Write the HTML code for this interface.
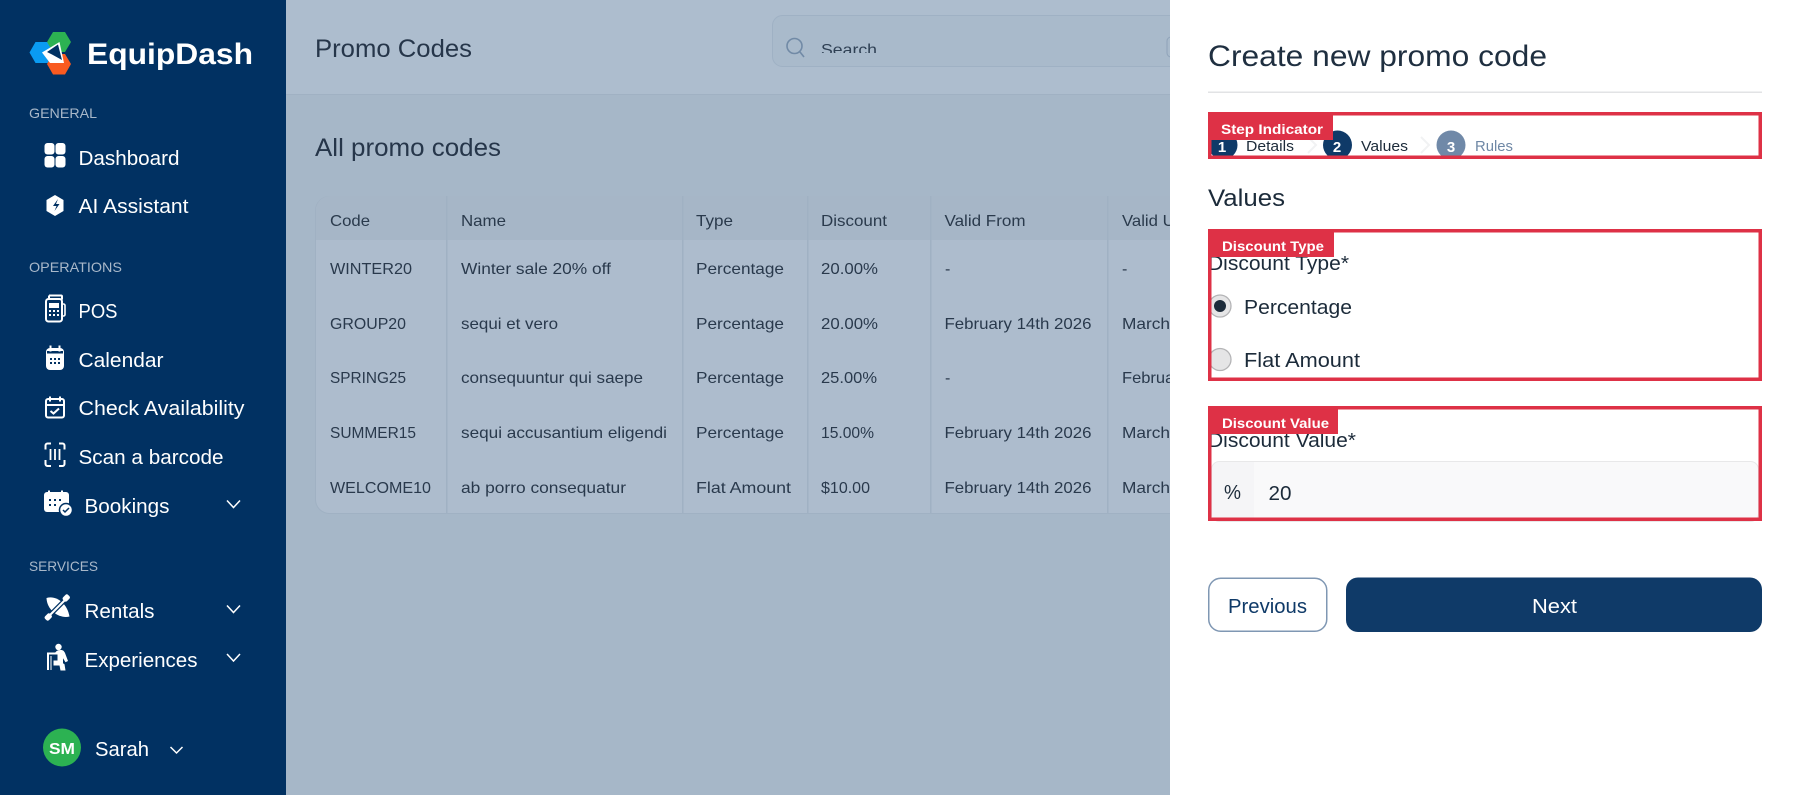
<!DOCTYPE html>
<html><head><meta charset="utf-8"><title>Promo Codes</title>
<style>
html,body{margin:0;padding:0;width:1800px;height:795px;overflow:hidden;background:#fff}
svg{display:block;position:absolute;left:0;top:0}
text{font-family:"Liberation Sans",sans-serif}
.n{font-size:20px;fill:#fff}
.s{font-size:14px;fill:#a9b8c9}
.t{font-size:16px;fill:#29394c}
.h{font-size:16px;fill:#2a3a4c}
.lb{font-size:14px;fill:#fff;font-weight:bold}
.f{font-size:20px;fill:#1c2b3a}
.st{font-size:15px;fill:#1c2b3a}
</style></head><body>
<svg width="1800" height="795" viewBox="0 0 1800 795" xmlns="http://www.w3.org/2000/svg">
<defs><clipPath id="step"><rect x="1211" y="115" width="548" height="41"/></clipPath>
<clipPath id="bx2"><rect x="1211" y="232" width="548" height="146"/></clipPath>
<clipPath id="srch"><rect x="815" y="35" width="70" height="18"/></clipPath></defs>

<!-- main background -->
<rect x="286" y="0" width="884" height="795" fill="#a6b7c8"/>
<rect x="286" y="0" width="884" height="94" fill="#adbdce"/>
<rect x="286" y="94" width="884" height="1" fill="#a0b1c3"/>
<text x="315" y="57" font-size="25" fill="#26364a" textLength="157" lengthAdjust="spacingAndGlyphs">Promo Codes</text>
<rect x="772.5" y="15.5" width="420" height="51" rx="10" fill="#a9bacb" stroke="#9fb1c4"/>
<circle cx="794.5" cy="46" r="7.5" fill="none" stroke="#718aa6" stroke-width="1.6"/>
<path d="M800 52l4 5" stroke="#718aa6" stroke-width="1.6" fill="none"/>
<g clip-path="url(#srch)"><text x="821" y="55" font-size="16" fill="#2f4054" textLength="56" lengthAdjust="spacingAndGlyphs">Search</text></g>
<rect x="1167" y="37" width="20" height="20" rx="4" fill="none" stroke="#8fa3b9"/>
<text x="315" y="156" font-size="25" fill="#26364a" textLength="186" lengthAdjust="spacingAndGlyphs">All promo codes</text>

<!-- table -->
<rect x="315.500" y="196.500" width="880" height="317" rx="14" fill="#adbccd" stroke="#a0b1c3"/>
<path d="M316 240V210a14 14 0 0 1 14-14H1190V240Z" fill="#a6b6c7"/>
<g fill="#a0b1c3"><rect x="446" y="196" width="1.500" height="318"/><rect x="682" y="196" width="1.500" height="318"/><rect x="807" y="196" width="1.500" height="318"/><rect x="930" y="196" width="1.500" height="318"/><rect x="1107" y="196" width="1.500" height="318"/></g>
<g class="h">
<text class="h" x="330" y="226" textLength="40" lengthAdjust="spacingAndGlyphs">Code</text>
<text class="h" x="461" y="226" textLength="45" lengthAdjust="spacingAndGlyphs">Name</text>
<text class="h" x="696" y="226" textLength="37" lengthAdjust="spacingAndGlyphs">Type</text>
<text class="h" x="821" y="226" textLength="66" lengthAdjust="spacingAndGlyphs">Discount</text>
<text class="h" x="944.500" y="226" textLength="81" lengthAdjust="spacingAndGlyphs">Valid From</text>
<text class="h" x="1122" y="226" textLength="74" lengthAdjust="spacingAndGlyphs">Valid Until</text>
</g>
<text class="t" x="330" y="274" textLength="82" lengthAdjust="spacingAndGlyphs">WINTER20</text>
<text class="t" x="461" y="274" textLength="150" lengthAdjust="spacingAndGlyphs">Winter sale 20% off</text>
<text class="t" x="696" y="274" textLength="88" lengthAdjust="spacingAndGlyphs">Percentage</text>
<text class="t" x="821" y="274" textLength="57" lengthAdjust="spacingAndGlyphs">20.00%</text>
<text class="t" x="945" y="274">-</text>
<text class="t" x="1122" y="274">-</text>

<text class="t" x="330" y="329" textLength="76" lengthAdjust="spacingAndGlyphs">GROUP20</text>
<text class="t" x="461" y="329" textLength="97" lengthAdjust="spacingAndGlyphs">sequi et vero</text>
<text class="t" x="696" y="329" textLength="88" lengthAdjust="spacingAndGlyphs">Percentage</text>
<text class="t" x="821" y="329" textLength="57" lengthAdjust="spacingAndGlyphs">20.00%</text>
<text class="t" x="944.500" y="329" textLength="147" lengthAdjust="spacingAndGlyphs">February 14th 2026</text>
<text class="t" x="1122" y="329" textLength="48" lengthAdjust="spacingAndGlyphs">March</text>

<text class="t" x="330" y="383" textLength="76" lengthAdjust="spacingAndGlyphs">SPRING25</text>
<text class="t" x="461" y="383" textLength="182" lengthAdjust="spacingAndGlyphs">consequuntur qui saepe</text>
<text class="t" x="696" y="383" textLength="88" lengthAdjust="spacingAndGlyphs">Percentage</text>
<text class="t" x="821" y="383" textLength="56" lengthAdjust="spacingAndGlyphs">25.00%</text>
<text class="t" x="945" y="383">-</text>
<text class="t" x="1122" y="383" textLength="66" lengthAdjust="spacingAndGlyphs">February</text>

<text class="t" x="330" y="438" textLength="86" lengthAdjust="spacingAndGlyphs">SUMMER15</text>
<text class="t" x="461" y="438" textLength="206" lengthAdjust="spacingAndGlyphs">sequi accusantium eligendi</text>
<text class="t" x="696" y="438" textLength="88" lengthAdjust="spacingAndGlyphs">Percentage</text>
<text class="t" x="821" y="438" textLength="53" lengthAdjust="spacingAndGlyphs">15.00%</text>
<text class="t" x="944.500" y="438" textLength="147" lengthAdjust="spacingAndGlyphs">February 14th 2026</text>
<text class="t" x="1122" y="438" textLength="48" lengthAdjust="spacingAndGlyphs">March</text>

<text class="t" x="330" y="493" textLength="101" lengthAdjust="spacingAndGlyphs">WELCOME10</text>
<text class="t" x="461" y="493" textLength="165" lengthAdjust="spacingAndGlyphs">ab porro consequatur</text>
<text class="t" x="696" y="493" textLength="95" lengthAdjust="spacingAndGlyphs">Flat Amount</text>
<text class="t" x="821" y="493" textLength="49" lengthAdjust="spacingAndGlyphs">$10.00</text>
<text class="t" x="944.500" y="493" textLength="147" lengthAdjust="spacingAndGlyphs">February 14th 2026</text>
<text class="t" x="1122" y="493" textLength="48" lengthAdjust="spacingAndGlyphs">March</text>

<!-- sidebar -->
<rect x="0" y="0" width="286" height="795" fill="#013162"/>
<polygon points="29.500,52.500 35.500,42 52,42 58,52.500 52,63 35.500,63" fill="#0a9bf2"/>
<polygon points="47,42 53,32 65,32 71,42 65,52 53,52" fill="#2cb252"/>
<polygon points="47,64 53,54 65,54 71,64 65,74.500 53,74.500" fill="#f95a20"/>
<polygon points="42,52.500 59.500,42 64,63 50,63" fill="#fff"/>
<polygon points="47,52 58,44.500 62,60 52,54.500" fill="#013162"/>
<text x="87" y="64" font-size="30" font-weight="bold" fill="#fff" textLength="166" lengthAdjust="spacingAndGlyphs">EquipDash</text>

<text class="s" x="29" y="118" textLength="68" lengthAdjust="spacingAndGlyphs">GENERAL</text>
<text class="s" x="29" y="272" textLength="93" lengthAdjust="spacingAndGlyphs">OPERATIONS</text>
<text class="s" x="29" y="571" textLength="69" lengthAdjust="spacingAndGlyphs">SERVICES</text>

<text class="n" x="78.500" y="165" textLength="101" lengthAdjust="spacingAndGlyphs">Dashboard</text>
<text class="n" x="78.500" y="213" textLength="110" lengthAdjust="spacingAndGlyphs">AI Assistant</text>
<text class="n" x="78.500" y="318" textLength="39" lengthAdjust="spacingAndGlyphs">POS</text>
<text class="n" x="78.500" y="367" textLength="85" lengthAdjust="spacingAndGlyphs">Calendar</text>
<text class="n" x="78.500" y="415" textLength="166" lengthAdjust="spacingAndGlyphs">Check Availability</text>
<text class="n" x="78.500" y="464" textLength="145" lengthAdjust="spacingAndGlyphs">Scan a barcode</text>
<text class="n" x="84.500" y="513" textLength="85" lengthAdjust="spacingAndGlyphs">Bookings</text>
<text class="n" x="84.500" y="618" textLength="70" lengthAdjust="spacingAndGlyphs">Rentals</text>
<text class="n" x="84.500" y="667" textLength="113" lengthAdjust="spacingAndGlyphs">Experiences</text>

<!-- icons -->
<g fill="#fff">
<rect x="44.500" y="143" width="10" height="11.500" rx="3"/><rect x="55.500" y="143" width="10" height="11.500" rx="3"/><rect x="44.500" y="156" width="10" height="11.500" rx="3"/><rect x="55.500" y="156" width="10" height="11.500" rx="3"/>
<polygon points="55,195 63.500,200 63.500,211 55,216 46.500,211 46.500,200"/>
</g>
<path d="M58 199l-5 7h3.500l-2 5 5-7h-3.500z" fill="#013162"/>
<!-- POS -->
<path d="M49 295.500h12a1 1 0 0 1 1 1v3" fill="none" stroke="#fff" stroke-width="2"/>
<rect x="46" y="299" width="16" height="22.500" rx="2.500" fill="none" stroke="#fff" stroke-width="2"/>
<path d="M49 295.500v4" stroke="#fff" stroke-width="2"/>
<rect x="49" y="303" width="10" height="5" fill="#fff"/>
<path d="M62 304h1.500a1.500 1.500 0 0 1 1.500 1.500v9a1.500 1.500 0 0 1-1.500 1.500H62" fill="none" stroke="#fff" stroke-width="1.600"/>
<g fill="#fff"><rect x="49" y="310" width="2" height="2"/><rect x="53" y="310" width="2" height="2"/><rect x="57" y="310" width="2" height="2"/><rect x="49" y="314" width="2" height="2"/><rect x="53" y="314" width="2" height="2"/><rect x="57" y="314" width="2" height="2"/></g>
<!-- Calendar -->
<rect x="46" y="348" width="18" height="22" rx="4" fill="#fff"/>
<rect x="47" y="351" width="16" height="2.500" fill="#013162"/>
<rect x="49.500" y="345.500" width="2" height="6" fill="#fff"/><rect x="58.500" y="345.500" width="2" height="6" fill="#fff"/>
<g fill="#013162"><rect x="50" y="358" width="2" height="2"/><rect x="54" y="358" width="2" height="2"/><rect x="58" y="358" width="2" height="2"/><rect x="50" y="362" width="2" height="2"/><rect x="54" y="362" width="2" height="2"/><rect x="58" y="362" width="2" height="2"/></g>
<!-- Check availability -->
<rect x="46" y="399" width="18" height="18.500" rx="2" fill="none" stroke="#fff" stroke-width="2"/>
<path d="M46 405h18M50 396.500v5M60 396.500v5" stroke="#fff" stroke-width="2" fill="none"/>
<path d="M50.500 411l3 2.500 5.500-5" stroke="#fff" stroke-width="2" fill="none"/>
<!-- Scan -->
<path d="M51 443.500h-3.500a2 2 0 0 0-2 2v4M59 443.500h3.500a2 2 0 0 1 2 2v4M51 466h-3.500a2 2 0 0 1-2-2v-4M59 466h3.500a2 2 0 0 0 2-2v-4" fill="none" stroke="#fff" stroke-width="2"/>
<path d="M50.500 449v11M55 449v11M59.500 449v11" fill="none" stroke="#fff" stroke-width="1.800"/>
<!-- Bookings -->
<rect x="44" y="492" width="25" height="20" rx="3" fill="#fff"/>
<rect x="48" y="490.500" width="2" height="3" fill="#fff"/><rect x="61" y="490.500" width="2" height="3" fill="#fff"/>
<g fill="#013162"><rect x="49" y="499" width="2" height="2"/><rect x="54" y="499" width="2" height="2"/><rect x="59" y="499" width="2" height="2"/><rect x="49" y="504" width="2" height="2"/><rect x="54" y="504" width="2" height="2"/></g>
<circle cx="66" cy="510" r="6.500" fill="#fff" stroke="#013162" stroke-width="1.500"/>
<path d="M63 510l2 2 4-4" fill="none" stroke="#013162" stroke-width="1.500"/>
<!-- Rentals -->
<path d="M46.500 598C55 595 67 602 69.500 616.500 60 619 47 611 46.500 598Z" fill="#fff"/>
<path d="M67.500 597.500L47.500 617.500" stroke="#013162" stroke-width="4.500"/>
<path d="M67 598L48 617" stroke="#fff" stroke-width="2"/>
<rect x="63.500" y="594.500" width="5.500" height="7" rx="2" transform="rotate(45 66.250 598)" fill="#fff"/>
<rect x="45.500" y="613.500" width="5.500" height="7" rx="2" transform="rotate(45 48.250 617)" fill="#fff"/>
<!-- Experiences -->
<circle cx="58.500" cy="647" r="3.200" fill="#fff"/>
<path d="M48 670v-16.500h9" fill="none" stroke="#fff" stroke-width="2"/>
<path d="M51 670v-14" fill="none" stroke="#fff" stroke-width="1"/>
<path d="M55 653c1-2 3-3 6-3 2 0 3 1 4 3l3 8-2.500 1.200-2.500-4v5l1.500 1 1 6.300h-5l-1-5h-6v-5h4v-6h-3z" fill="#fff"/>
<!-- chevrons -->
<g fill="none" stroke="#fff" stroke-width="1.500">
<path d="M227 500.500l6.500 7 6.500-7"/><path d="M227 605.500l6.500 7 6.500-7"/><path d="M227 654l6.500 7 6.500-7"/><path d="M170.500 747l6 6 6-6"/>
</g>
<circle cx="62" cy="747.500" r="19" fill="#2cb252"/>
<text x="49" y="754" font-size="16" font-weight="bold" fill="#fff" textLength="26" lengthAdjust="spacingAndGlyphs">SM</text>
<text class="n" x="95" y="756" textLength="54" lengthAdjust="spacingAndGlyphs">Sarah</text>

<!-- panel -->
<rect x="1170" y="0" width="630" height="795" fill="#fff"/>
<text x="1208" y="66" font-size="30" fill="#1f2f40" textLength="339" lengthAdjust="spacingAndGlyphs">Create new promo code</text>
<rect x="1208" y="91.500" width="554" height="1.500" fill="#e2e3e5"/>

<!-- stepper -->
<g clip-path="url(#step)">
<circle cx="1223" cy="145" r="14.500" fill="#0f3a68"/>
<circle cx="1337.500" cy="145" r="14.500" fill="#0f3a68"/>
<circle cx="1451" cy="145" r="14.500" fill="#7089a8"/>
<text x="1222" y="152" font-size="15" font-weight="bold" fill="#fff" text-anchor="middle">1</text>
<text x="1337" y="152" font-size="15" font-weight="bold" fill="#fff" text-anchor="middle">2</text>
<text x="1451" y="152" font-size="15" font-weight="bold" fill="#fff" text-anchor="middle">3</text>
<path d="M1308 137l8 8-8 8M1421 137l8 8-8 8" fill="none" stroke="#f1f2f3" stroke-width="2"/>
</g>
<text class="st" x="1246" y="151" textLength="48" lengthAdjust="spacingAndGlyphs">Details</text>
<text class="st" x="1361" y="151" textLength="47" lengthAdjust="spacingAndGlyphs">Values</text>
<text class="st" x="1475" y="151" textLength="38" lengthAdjust="spacingAndGlyphs" style="fill:#6f88a6">Rules</text>

<text x="1208" y="206" font-size="24" fill="#1c2b3a" textLength="77" lengthAdjust="spacingAndGlyphs">Values</text>

<!-- discount type -->
<text class="f" x="1208" y="270" textLength="141" lengthAdjust="spacingAndGlyphs">Discount Type*</text>
<g clip-path="url(#bx2)">
<circle cx="1220" cy="306" r="11" fill="#e5e5e6" stroke="#b4b4b6" stroke-width="1.300"/>
<circle cx="1220" cy="306" r="6" fill="#1c2b3a"/>
<circle cx="1220" cy="359.500" r="11" fill="#e5e5e6" stroke="#b4b4b6" stroke-width="1.300"/>
</g>
<text class="f" x="1244" y="314" textLength="108" lengthAdjust="spacingAndGlyphs">Percentage</text>
<text class="f" x="1244" y="367" textLength="116" lengthAdjust="spacingAndGlyphs">Flat Amount</text>

<!-- discount value -->
<text class="f" x="1208" y="447" textLength="148" lengthAdjust="spacingAndGlyphs">Discount Value*</text>
<rect x="1211.500" y="461.500" width="547" height="60" rx="8" fill="#f9f9fa" stroke="#e8e8e9"/>
<path d="M1212 470a8 8 0 0 1 8-8h34v56h-42z" fill="#f5f5f7"/>
<text x="1224" y="499" font-size="20" fill="#1c2b3a" textLength="17" lengthAdjust="spacingAndGlyphs">%</text>
<text class="f" x="1268.500" y="500" textLength="23" lengthAdjust="spacingAndGlyphs">20</text>

<!-- red boxes -->
<g fill="none" stroke="#de3146" stroke-width="3.500">
<rect x="1209.750" y="113.750" width="550.500" height="43.500"/>
<rect x="1209.750" y="230.750" width="550.500" height="148.500"/>
<rect x="1209.750" y="407.750" width="550.500" height="111.500"/>
</g>
<g fill="#de3146"><rect x="1208" y="112" width="125" height="28"/><rect x="1208" y="229" width="126" height="28"/><rect x="1208" y="406" width="130" height="28"/></g>
<text class="lb" x="1221" y="134" textLength="102" lengthAdjust="spacingAndGlyphs">Step Indicator</text>
<text class="lb" x="1222" y="251" textLength="102" lengthAdjust="spacingAndGlyphs">Discount Type</text>
<text class="lb" x="1222" y="428" textLength="107" lengthAdjust="spacingAndGlyphs">Discount Value</text>

<!-- buttons -->
<rect x="1208.750" y="578.250" width="118" height="53" rx="12" fill="#fff" stroke="#7f97b3" stroke-width="1.500"/>
<text x="1228" y="613" font-size="20" fill="#0f3a68" textLength="79" lengthAdjust="spacingAndGlyphs">Previous</text>
<rect x="1346" y="577.500" width="416" height="54.500" rx="12" fill="#0f3a68"/>
<text x="1532" y="613" font-size="20" fill="#fff" textLength="45" lengthAdjust="spacingAndGlyphs">Next</text>
</svg>
</body></html>
